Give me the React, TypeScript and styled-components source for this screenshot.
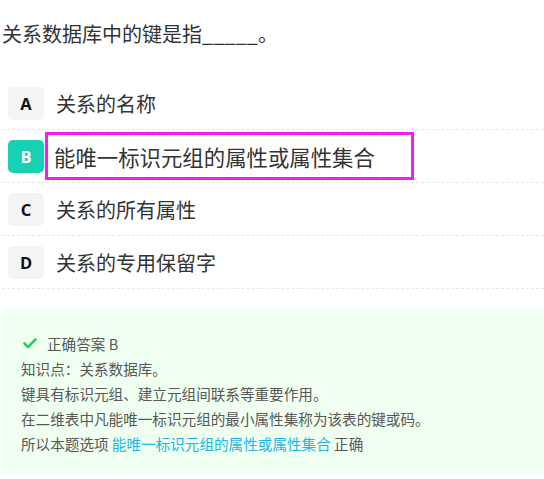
import React from "react";
import styled, { createGlobalStyle } from "styled-components";

const Global = createGlobalStyle`
  html, body { margin: 0; padding: 0; background: #fff; }
  body { font-family: "Noto Sans CJK SC", "Noto Sans", sans-serif; }
`;

const Page = styled.div`
  padding: 20px 0 0 2px;
  width: 542px;
`;

const Question = styled.p`
  margin: 0 0 29px 0;
  font-size: 20px;
  line-height: 28px;
  color: #333;
`;

const Row = styled.div`
  display: flex;
  align-items: center;
  height: 52px;
  border-bottom: 1px dashed #e6e6e6;
  padding-left: 6px;
`;

const Badge = styled.span<{ $active?: boolean }>`
  display: flex;
  align-items: center;
  justify-content: center;
  width: 36px;
  height: 33px;
  border-radius: 5px;
  background: ${(p) => (p.$active ? "#17d1b5" : "#f4f4f4")};
  color: ${(p) => (p.$active ? "#fff" : "#111")};
  font-family: "Open Sans", "Noto Sans", sans-serif;
  font-weight: 700;
  font-size: 16.5px;
  flex: none;
`;

const OptionText = styled.span<{ $highlight?: boolean }>`
  display: flex;
  align-items: center;
  color: #333;
  font-size: ${(p) => (p.$highlight ? "21.4px" : "20px")};
  margin-left: ${(p) => (p.$highlight ? "1px" : "12px")};
  ${(p) =>
    p.$highlight
      ? `border: 3px solid #f01ef0; box-sizing: border-box; width: 369px; height: 48px; padding-left: 6px;`
      : ""}
`;

const Analysis = styled.div`
  margin-top: 20px;
  background: #effff0;
  padding: 22px 19px 18px 19px;
  color: #585858;
  font-size: 14.6px;
  line-height: 25px;
`;

const AnswerLine = styled.div`
  display: flex;
  align-items: center;
  gap: 10px;
  padding-left: 2px;
`;

const Link = styled.span`
  color: #1ab6ea;
`;

const options = [
  { key: "A", text: "关系的名称" },
  { key: "B", text: "能唯一标识元组的属性或属性集合", active: true },
  { key: "C", text: "关系的所有属性" },
  { key: "D", text: "关系的专用保留字" },
];

export default function App() {
  return (
    <>
      <Global />
      <Page>
        <Question>关系数据库中的键是指_____。</Question>
        {options.map((o) => (
          <Row key={o.key}>
            <Badge $active={o.active}>{o.key}</Badge>
            <OptionText $highlight={o.active}>{o.text}</OptionText>
          </Row>
        ))}
        <Analysis>
          <AnswerLine>
            <svg width="14" height="11" viewBox="0 0 14 11">
              <polyline
                points="1.5,5.5 5,9 12.5,1.5"
                fill="none"
                stroke="#2bc96a"
                strokeWidth="2.6"
                strokeLinecap="round"
                strokeLinejoin="round"
              />
            </svg>
            <span>正确答案 B</span>
          </AnswerLine>
          <div>知识点：关系数据库。</div>
          <div>键具有标识元组、建立元组间联系等重要作用。</div>
          <div>在二维表中凡能唯一标识元组的最小属性集称为该表的键或码。</div>
          <div>
            所以本题选项 <Link>能唯一标识元组的属性或属性集合</Link> 正确
          </div>
        </Analysis>
      </Page>
    </>
  );
}
